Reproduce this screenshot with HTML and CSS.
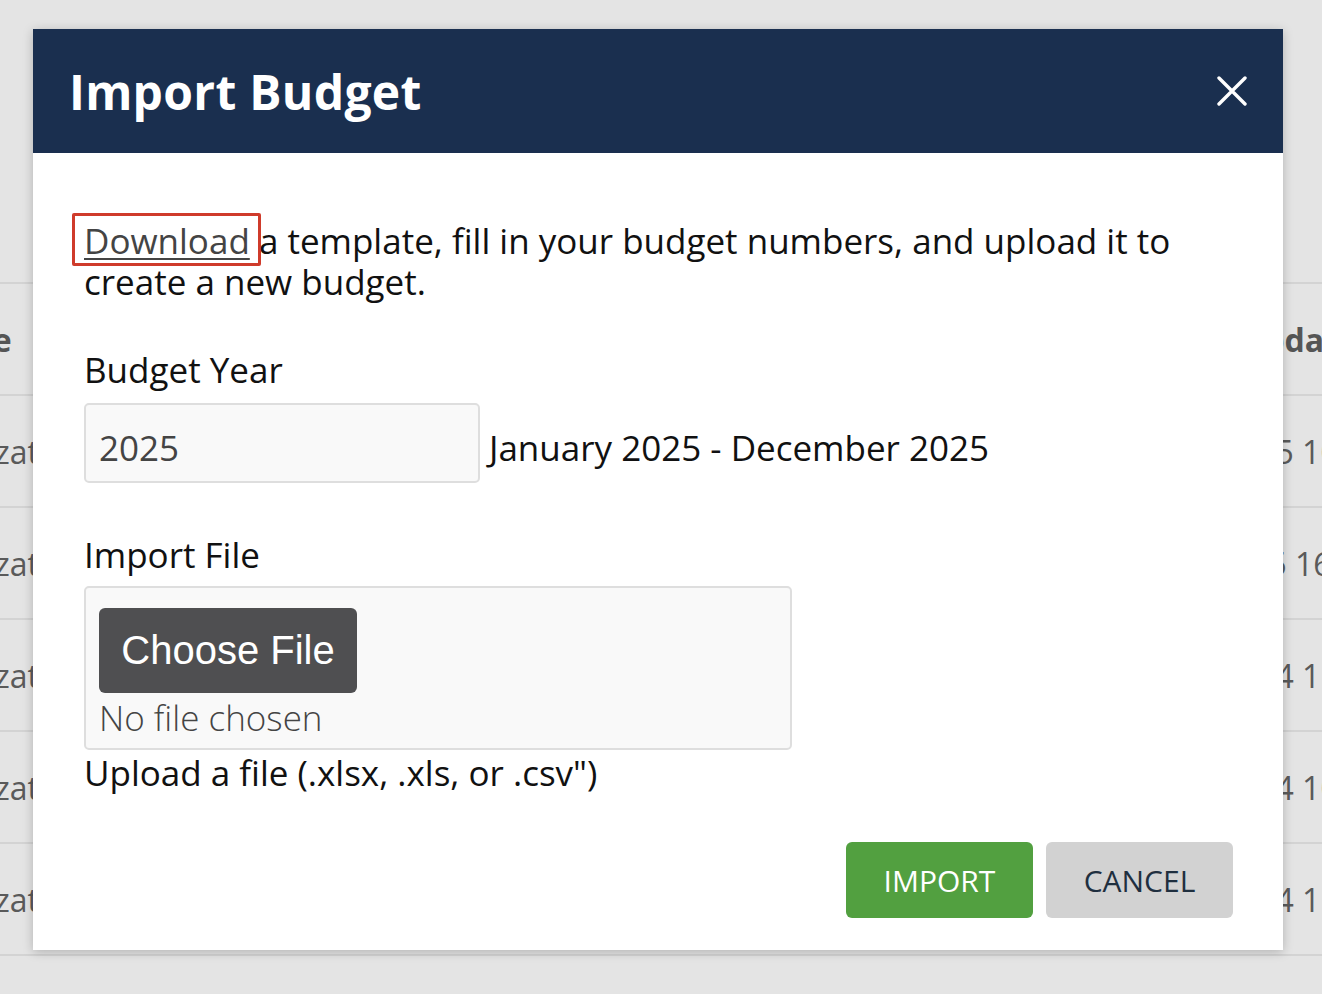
FILE: index.html
```html
<!DOCTYPE html>
<html>
<head>
<meta charset="utf-8">
<link rel="stylesheet" href="styles.css">
</head>
<body>
<div class="page">
  <div class="table">
    <div class="row head"><span class="c1">Name</span><span class="c2">Updated</span></div>
    <div class="row"><span class="c1">Organization</span><span class="c3">2025 10:21 AM</span></div>
    <div class="row"><span class="c1">Organization</span><span class="c3 c3-alt">2025 16:02 PM</span></div>
    <div class="row"><span class="c1">Organization</span><span class="c3">2024 11:45 AM</span></div>
    <div class="row"><span class="c1">Organization</span><span class="c3">2024 10:12 AM</span></div>
    <div class="row"><span class="c1">Organization</span><span class="c3">2024 11:30 AM</span></div>
  </div>
</div>

<div class="modal">
  <div class="modal-header">
    <h1 class="modal-title">Import Budget</h1>
    <button class="close" aria-label="Close">
      <svg width="30" height="30" viewBox="0 0 30 30"><path d="M2 2 L28 28 M28 2 L2 28" stroke="#fff" stroke-width="3.4" stroke-linecap="round"/></svg>
    </button>
  </div>
  <div class="modal-body">
    <p class="intro"><a class="dl" href="#">Download</a> a template, fill in your budget numbers, and upload it to create a new budget.</p>

    <div class="field">
      <label class="label">Budget Year</label>
      <div class="year-row"><span class="input">2025</span> <span class="range">January 2025 - December 2025</span></div>
    </div>

    <div class="field field-file">
      <label class="label">Import File</label>
      <div class="filebox">
        <span class="choose">Choose File</span>
        <span class="nofile">No file chosen</span>
      </div>
      <div class="hint">Upload a file (.xlsx, .xls, or .csv")</div>
    </div>

    <div class="actions">
      <button class="btn btn-import">IMPORT</button>
      <button class="btn btn-cancel">CANCEL</button>
    </div>
  </div>
</div>
</body>
</html>
```
FILE: styles.css
```css
html, body {
  margin: 0;
  padding: 0;
}
body {
  width: 1322px;
  height: 994px;
  overflow: hidden;
  background: #e4e4e4;
  font-family: "Open Sans", "DejaVu Sans", sans-serif;
  position: relative;
}
.page {
  padding-top: 282px;
}
.table {
  border-top: 2px solid #d3d3d3;
  overflow: hidden;
}
.row {
  height: 110px;
  border-bottom: 2px solid #d3d3d3;
  display: flex;
  align-items: center;
  font-size: 32px;
  color: #5a5a5a;
  white-space: nowrap;
}
.row .c1 {
  margin-left: -106px;
}
.row.head {
  font-weight: 700;
  color: #555;
}
.row.head .c1 {
  margin-left: -84px;
}
.row .c2 {
  margin-left: auto;
  margin-right: -55px;
}
.row .c3 {
  margin-left: auto;
  margin-right: -119px;
}
.row .c3-alt {
  margin-right: -111px;
}

.modal {
  position: absolute;
  left: 33px;
  top: 29px;
  width: 1250px;
  height: 921px;
  background: #fff;
  box-shadow: 0 2px 10px rgba(0,0,0,0.22);
  display: flex;
  flex-direction: column;
}
.modal-header {
  height: 124px;
  background: #1a2f4f;
  display: flex;
  align-items: center;
  justify-content: space-between;
  padding: 0 36px;
  box-sizing: border-box;
  flex-shrink: 0;
}
.modal-title {
  margin: 0;
  color: #fff;
  font-size: 48px;
  font-weight: 700;
  letter-spacing: 0.3px;
}
.close {
  background: none;
  border: 0;
  padding: 0;
  width: 30px;
  height: 30px;
  display: flex;
}
.modal-body {
  flex: 1;
  padding: 67px 50px 32px 51px;
  display: flex;
  flex-direction: column;
  font-size: 35px;
  line-height: 41px;
  color: #111;
}
.intro {
  margin: 0;
}
.dl {
  color: #444;
  text-decoration: underline;
  text-underline-offset: 4px;
  text-decoration-thickness: 2px;
  position: relative;
}
.dl::after {
  content: "";
  position: absolute;
  left: -12px;
  right: -11px;
  top: -4px;
  bottom: -2px;
  border: 3px solid #cf3b2b;
  border-radius: 2px;
}
.field {
  margin-top: 47px;
}
.label {
  display: block;
}
.year-row {
  margin-top: 13px;
  display: flex;
  align-items: center;
  gap: 9px;
}
.year-row .range {
  padding-top: 9px;
}
.input {
  width: 396px;
  height: 80px;
  box-sizing: border-box;
  background: #f9f9f9;
  border: 2px solid #dedede;
  border-radius: 5px;
  padding: 9px 0 0 13px;
  display: flex;
  align-items: center;
  color: #444;
}
.field-file {
  margin-top: 51px;
}
.filebox {
  margin-top: 11px;
  width: 708px;
  height: 164px;
  box-sizing: border-box;
  background: #f9f9f9;
  border: 2px solid #dedede;
  border-radius: 5px;
  padding: 20px 13px 0;
  display: flex;
  flex-direction: column;
  align-items: flex-start;
}
.choose {
  width: 258px;
  height: 85px;
  box-sizing: border-box;
  background: #4f4f51;
  border-radius: 6px;
  color: #fff;
  font-family: "Liberation Sans", Arial, sans-serif;
  font-size: 40px;
  display: flex;
  align-items: center;
  justify-content: center;
}
.nofile {
  margin-top: 4px;
  color: #444;
  font-weight: 300;
}
.hint {
  margin-top: 2px;
}
.actions {
  margin-top: auto;
  display: flex;
  justify-content: flex-end;
  gap: 13px;
}
.btn {
  width: 187px;
  height: 76px;
  border: 0;
  border-radius: 6px;
  font-family: "Open Sans", sans-serif;
  font-size: 30px;
  padding: 0;
}
.btn-import {
  background: #52a040;
  color: #fff;
}
.btn-cancel {
  background: #d2d2d2;
  color: #1f2f3f;
}
```
